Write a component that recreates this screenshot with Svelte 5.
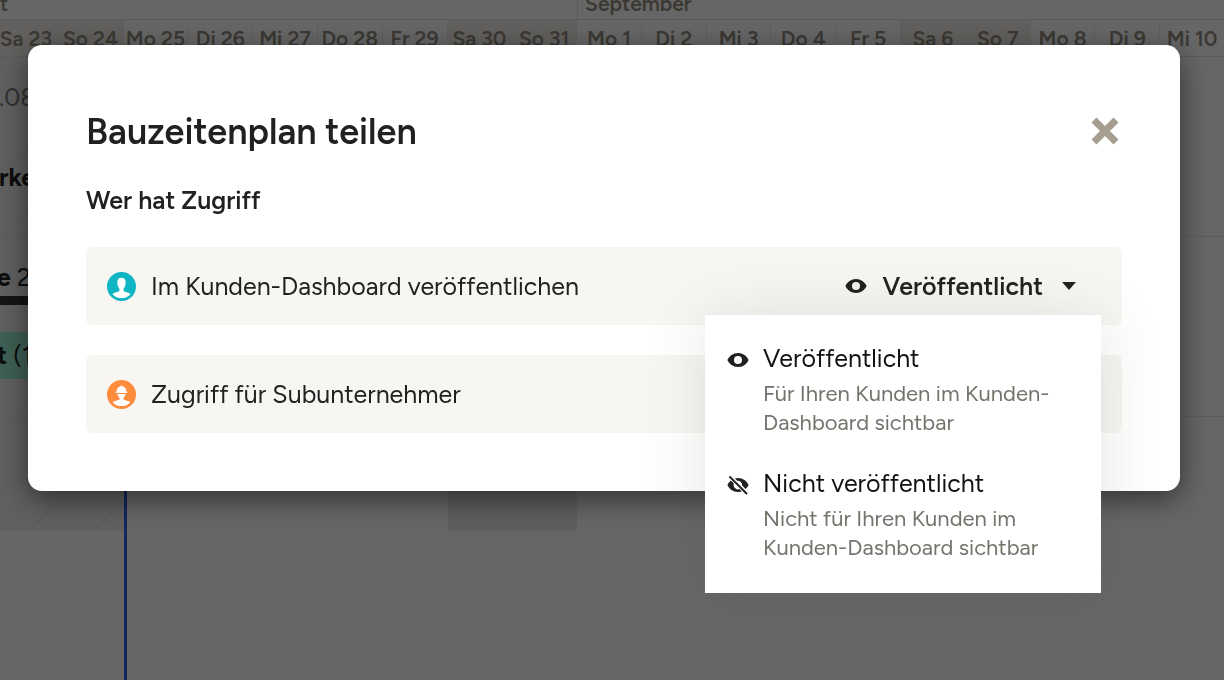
<script>
    const days = [
        "Sa 23", "So 24", "Mo 25", "Di 26", "Mi 27", "Do 28", "Fr 29", "Sa 30", "So 31", "Mo 1",
        "Di 2", "Mi 3", "Do 4", "Fr 5", "Sa 6", "So 7", "Mo 8", "Di 9", "Mi 10",
    ];

    const options = [
        {
            label: "Veröffentlicht",
            text: "Für Ihren Kunden im Kunden-Dashboard sichtbar",
            visible: true,
        },
        {
            label: "Nicht veröffentlicht",
            text: "Nicht für Ihren Kunden im Kunden-Dashboard sichtbar",
            visible: false,
        },
    ];

    let shown = $state(true);
    let open = $state(true);
    let selected = $state(0);

    const weekend = (day) => day.startsWith("S");

    function choose(i) {
        selected = i;
        open = false;
    }
</script>

{#snippet eye(visible)}
    <svg class="eye" viewBox="0 0 22 20" aria-hidden="true">
        {#if visible}
            <path
                fill-rule="evenodd"
                d="M11 3C6.200 3 2.200 5.900.4 10c1.800 4.100 5.800 7 10.600 7s8.800-2.900 10.600-7C19.800 5.900 15.800 3 11 3Zm0 3a4 4 0 1 1 0 8a4 4 0 0 1 0-8Z"
            />
        {:else}
            <path
                d="M11 3c4.800 0 8.800 2.900 10.600 7a11.400 11.400 0 0 1-3 4.100l-3.500-3.500A4.400 4.400 0 0 0 10.300 5.800L7.900 3.500A11 11 0 0 1 11 3ZM3.900 5.600l3 3a4.300 4.300 0 0 0 5.500 5.500l2.300 2.300A11 11 0 0 1 11 17C6.200 17 2.200 14.100.4 10a11.400 11.400 0 0 1 3.500-4.400Z"
            />
            <path d="M2.400 1.400 20 19" fill="none" stroke="currentColor" stroke-width="2" />
        {/if}
    </svg>
{/snippet}

<div class="plan">
    <div class="months">
        <div class="month">t</div>
        <div class="month">September</div>
    </div>
    <div class="days">
        {#each days as day}
            <div class="day" class:weekend={weekend(day)}>{day}</div>
        {/each}
    </div>
    <div class="chart">
        <div class="columns">
            {#each days as day, i}
                <div class="column" class:weekend={weekend(day)} class:holiday={i < 2} class:today={i === 2}></div>
            {/each}
        </div>
        <div class="tasks">
            <div class="task">
                <span class="date">.08</span>
                <b>rke</b>
            </div>
            <div class="task">
                <div class="group"><b>e</b> 2</div>
                <div class="bar"><b>t</b> (1</div>
            </div>
        </div>
    </div>
</div>

{#if shown}
    <div class="overlay">
        <div class="dialog" role="dialog" aria-modal="true" aria-labelledby="title">
            <header>
                <h1 id="title">Bauzeitenplan teilen</h1>
                <button class="close" aria-label="Schließen" onclick={() => (shown = false)}>
                    <svg viewBox="0 0 28 28" aria-hidden="true">
                        <path d="M3 3 25 25M25 3 3 25" fill="none" stroke="currentColor" stroke-width="7" />
                    </svg>
                </button>
            </header>
            <h2>Wer hat Zugriff</h2>

            <div class="access">
                <svg class="avatar" viewBox="0 0 30 30" aria-hidden="true">
                    <circle cx="15" cy="15" r="15" fill="#0fb5c3" />
                    <path
                        fill="#fff"
                        d="M15 6c3.200 0 4.600 2 4.300 5.400-.1 2.800-1 4.500-2.100 5.600v2.500c.8 1.500 5.800 1.700 7 3.400C22 25.800 18.800 27 15 27s-7-1.200-9.200-4.100c1.200-1.700 6.200-1.900 7-3.400V17c-1.100-1.100-2-2.800-2.100-5.600C10.400 8 11.800 6 15 6Z"
                    />
                </svg>
                <span>Im Kunden-Dashboard veröffentlichen</span>
                <button class="toggle" aria-haspopup="menu" aria-expanded={open} onclick={() => (open = !open)}>
                    {@render eye(options[selected].visible)}
                    {options[selected].label}
                    <svg class="caret" viewBox="0 0 14 8" aria-hidden="true"><path d="M0 0h14L7 8Z" /></svg>
                </button>
                {#if open}
                    <div class="menu" role="menu">
                        {#each options as option, i}
                            <button class="option" role="menuitem" onclick={() => choose(i)}>
                                {@render eye(option.visible)}
                                <span>
                                    <span class="label">{option.label}</span>
                                    <span class="text">{option.text}</span>
                                </span>
                            </button>
                        {/each}
                    </div>
                {/if}
            </div>

            <div class="access">
                <svg class="avatar" viewBox="0 0 30 30" aria-hidden="true">
                    <circle cx="15" cy="15" r="15" fill="#ff8b3d" />
                    <path
                        fill="#fff"
                        d="M10 12c0-3 1.500-5 3.800-5.500V6h2.400v.5C18.500 7 20 9 20 12l1 .2v1.300H9v-1.300ZM10.800 14.500h8.400c-.2 1.800-1 3-2.200 4v1.500c.8 1.300 5.800 1.500 7.100 3C22 25.800 18.800 27 15 27s-7-1.200-9.100-4c1.300-1.500 6.300-1.700 7.100-3v-1.500c-1.200-1-2-2.200-2.200-4Z"
                    />
                </svg>
                <span>Zugriff für Subunternehmer</span>
            </div>
        </div>
    </div>
{/if}

<style>
    :global(body) {
        margin: 0;
        overflow: hidden;
        font-family: Figtree, Lato, sans-serif;
        color: #212121;
    }

    button {
        font: inherit;
        color: inherit;
        background: none;
        border: none;
        padding: 0;
        cursor: pointer;
    }

    .plan {
        height: 100vh;
        margin: 0 -1px 0 -6px;
        font-size: 25px;
    }

    .months,
    .days,
    .columns {
        display: grid;
        grid-template-columns: repeat(19, 1fr);
    }

    .months,
    .days {
        color: #938c80;
        font-size: 21px;
        font-weight: 600;
    }

    .month {
        grid-column: span 9;
        height: 19px;
        line-height: 8px;
        padding-left: 6px;
        border-bottom: 1px solid #e4e2de;
    }

    .month + .month {
        grid-column: span 10;
        padding-left: 7px;
        border-left: 1px solid #e4e2de;
    }

    .day {
        height: 37px;
        line-height: 37px;
        text-align: center;
        white-space: nowrap;
        border-right: 1px solid #efedea;
        border-bottom: 1px solid #e4e2de;
        box-sizing: border-box;
    }

    .day.weekend {
        background: #f5f0ea;
    }

    .chart {
        display: grid;
        height: calc(100vh - 57px);
    }

    .columns,
    .tasks {
        grid-area: 1 / 1;
    }

    .column {
        height: 474px;
        border-right: 1px solid #f8f8f8;
        box-sizing: border-box;
    }

    .column.weekend {
        background: #ebebeb;
        border-color: #ebebeb;
    }

    .column.holiday {
        background: repeating-linear-gradient(135deg, #f0f0f0 0 44px, #e6e6e6 44px 45px);
        border-right: none;
    }

    .column.today {
        height: auto;
        border-left: 3px solid #3460e8;
        border-right: none;
    }

    .task {
        display: flex;
        flex-direction: column;
        gap: 50px;
        height: 180px;
        box-sizing: border-box;
        padding: 25px 0 0 5px;
        line-height: 30px;
        border-bottom: 1px solid #e8e8e8;
    }

    .task + .task {
        gap: 27px;
        padding-left: 0;
    }

    .date {
        color: #777;
    }

    .group,
    .bar {
        width: 120px;
        padding-left: 3px;
    }

    .group {
        padding-bottom: 4px;
        border-bottom: 9px solid #333;
    }

    .bar {
        line-height: 47px;
        background: #9df0d2;
    }

    .overlay {
        position: fixed;
        inset: 0;
        z-index: 1;
        padding: 45px 44px 0 28px;
        background: #0009;
    }

    .dialog {
        padding: 58px;
        background: #fff;
        border-radius: 14px;
        box-shadow: 0 8px 30px #0008;
    }

    header {
        display: flex;
        align-items: center;
        justify-content: space-between;
    }

    h1 {
        margin: 0;
        font-size: 36px;
        font-weight: 600;
        line-height: 58px;
    }

    h2 {
        margin: 23px 0 31px;
        font-size: 25px;
        font-weight: 600;
        line-height: 32px;
    }

    .close {
        width: 28px;
        height: 28px;
        margin: 0 3px 2px 0;
        color: #a69e8f;
    }

    .close svg {
        display: block;
    }

    .access {
        position: relative;
        display: flex;
        align-items: center;
        gap: 15px;
        height: 78px;
        padding: 0 46px 0 21px;
        font-size: 25px;
        background: #f8f6f3;
        border-radius: 6px;
    }

    .access + .access {
        margin-top: 30px;
    }

    .avatar {
        width: 29px;
        height: 29px;
    }

    .eye {
        flex: none;
        width: 22px;
        height: 20px;
        fill: currentColor;
    }

    .toggle {
        display: flex;
        align-items: center;
        gap: 15px;
        margin-left: auto;
        font-weight: 600;
    }

    .caret {
        width: 14px;
        height: 8px;
        margin-left: 4px;
        fill: currentColor;
    }

    .menu {
        position: absolute;
        top: 68px;
        right: 21px;
        z-index: 1;
        display: flex;
        flex-direction: column;
        gap: 28px;
        width: 396px;
        padding: 25px 38px 31px 22px;
        box-sizing: border-box;
        background: #fff;
        box-shadow: 0 4px 60px #46443024;
    }

    .option {
        display: flex;
        gap: 14px;
        text-align: left;
    }

    .option .eye {
        margin-top: 10px;
    }

    .label,
    .text {
        display: block;
    }

    .label {
        margin-bottom: 3px;
        line-height: 36px;
        color: #111;
    }

    .text {
        font-size: 22px;
        line-height: 29px;
        color: #75736c;
    }
</style>
